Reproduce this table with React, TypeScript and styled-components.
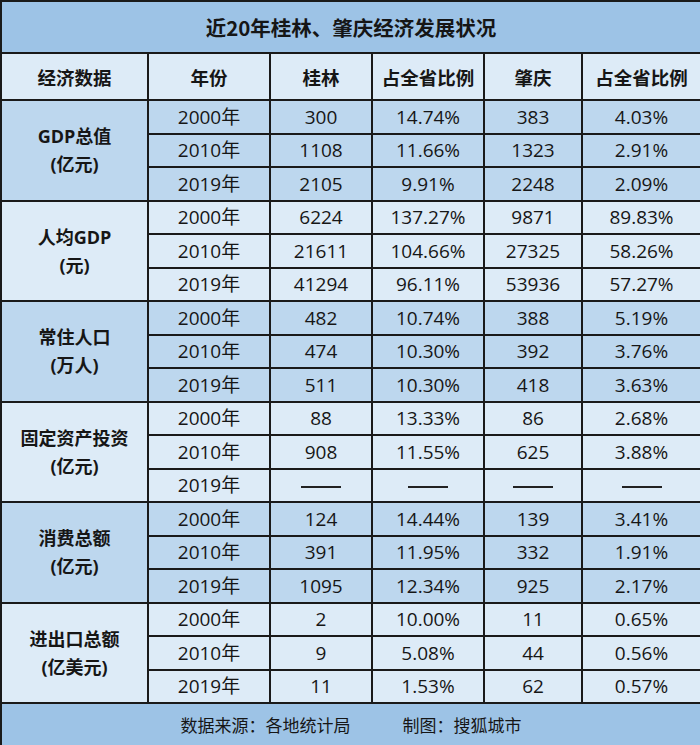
import React from "react";
import styled, { createGlobalStyle } from "styled-components";

const Global = createGlobalStyle`
  html, body { margin: 0; padding: 0; background: #ffffff; }
  body { font-family: "Open Sans", "Noto Sans CJK SC", sans-serif; color: #161616; }
`;

const Table = styled.table`
  width: 700px;
  border-collapse: collapse;
  table-layout: fixed;
  border: 2px solid #1a1a1a;
`;

const Col = styled.col<{ $w: number }>`
  width: ${(p) => p.$w}px;
`;

const TitleCell = styled.th`
  height: 50px;
  padding: 0;
  background: #9dc3e6;
  border: 2px solid #1a1a1a;
  font-family: "Noto Sans CJK SC", sans-serif;
  font-size: 20.5px;
  font-weight: 700;
  text-align: center;
  vertical-align: middle;
`;

const HeadCell = styled.th`
  height: 45px;
  padding: 0;
  background: #ddebf7;
  border: 2px solid #1a1a1a;
  font-family: "Noto Sans CJK SC", sans-serif;
  font-size: 18.5px;
  font-weight: 700;
  text-align: center;
  vertical-align: middle;
`;

const CategoryCell = styled.td<{ $dark: boolean }>`
  padding: 0;
  background: ${(p) => (p.$dark ? "#bdd7ee" : "#ddebf7")};
  border: 2px solid #1a1a1a;
  font-size: 18px;
  font-weight: 700;
  line-height: 28px;
  text-align: center;
  vertical-align: middle;
`;

const Cell = styled.td<{ $dark: boolean }>`
  height: 31.5px;
  padding: 0;
  background: ${(p) => (p.$dark ? "#bdd7ee" : "#ddebf7")};
  border: 2px solid #1a1a1a;
  font-size: 19px;
  font-weight: 400;
  line-height: 30px;
  text-align: center;
  vertical-align: middle;
`;

const FooterCell = styled.td`
  height: 41px;
  padding: 0;
  background: #9dc3e6;
  border: 2px solid #1a1a1a;
  font-family: "Noto Sans CJK SC", sans-serif;
  font-size: 17px;
  text-align: center;
  vertical-align: middle;
`;

const FooterRow = styled.div`
  display: flex;
  justify-content: center;
  gap: 52px;
`;

const Dash = styled.span`
  display: inline-block;
  width: 40px;
  height: 1.5px;
  background: #222;
  vertical-align: middle;
`;

type Group = {
  label: string[];
  rows: string[][];
};

const groups: Group[] = [
  {
    label: ["GDP总值", "(亿元)"],
    rows: [
      ["2000年", "300", "14.74%", "383", "4.03%"],
      ["2010年", "1108", "11.66%", "1323", "2.91%"],
      ["2019年", "2105", "9.91%", "2248", "2.09%"],
    ],
  },
  {
    label: ["人均GDP", "(元)"],
    rows: [
      ["2000年", "6224", "137.27%", "9871", "89.83%"],
      ["2010年", "21611", "104.66%", "27325", "58.26%"],
      ["2019年", "41294", "96.11%", "53936", "57.27%"],
    ],
  },
  {
    label: ["常住人口", "(万人)"],
    rows: [
      ["2000年", "482", "10.74%", "388", "5.19%"],
      ["2010年", "474", "10.30%", "392", "3.76%"],
      ["2019年", "511", "10.30%", "418", "3.63%"],
    ],
  },
  {
    label: ["固定资产投资", "(亿元)"],
    rows: [
      ["2000年", "88", "13.33%", "86", "2.68%"],
      ["2010年", "908", "11.55%", "625", "3.88%"],
      ["2019年", "—", "—", "—", "—"],
    ],
  },
  {
    label: ["消费总额", "(亿元)"],
    rows: [
      ["2000年", "124", "14.44%", "139", "3.41%"],
      ["2010年", "391", "11.95%", "332", "1.91%"],
      ["2019年", "1095", "12.34%", "925", "2.17%"],
    ],
  },
  {
    label: ["进出口总额", "(亿美元)"],
    rows: [
      ["2000年", "2", "10.00%", "11", "0.65%"],
      ["2010年", "9", "5.08%", "44", "0.56%"],
      ["2019年", "11", "1.53%", "62", "0.57%"],
    ],
  },
];

const widths = [147, 122, 102, 112, 98, 119];
const headers = ["经济数据", "年份", "桂林", "占全省比例", "肇庆", "占全省比例"];

export default function App() {
  return (
    <>
      <Global />
      <Table>
        <colgroup>
          {widths.map((w, i) => (
            <Col key={i} $w={w} />
          ))}
        </colgroup>
        <tbody>
          <tr>
            <TitleCell colSpan={6}>近20年桂林、肇庆经济发展状况</TitleCell>
          </tr>
          <tr>
            {headers.map((h, i) => (
              <HeadCell key={i}>{h}</HeadCell>
            ))}
          </tr>
          {groups.map((g, gi) => {
            const dark = gi % 2 === 0;
            return g.rows.map((r, ri) => (
              <tr key={`${gi}-${ri}`}>
                {ri === 0 && (
                  <CategoryCell rowSpan={3} $dark={dark}>
                    {g.label[0]}
                    <br />
                    {g.label[1]}
                  </CategoryCell>
                )}
                {r.map((v, ci) => (
                  <Cell key={ci} $dark={dark}>
                    {v === "—" ? <Dash /> : v}
                  </Cell>
                ))}
              </tr>
            ));
          })}
          <tr>
            <FooterCell colSpan={6}>
              <FooterRow>
                <span>数据来源：各地统计局</span>
                <span>制图：搜狐城市</span>
              </FooterRow>
            </FooterCell>
          </tr>
        </tbody>
      </Table>
    </>
  );
}
